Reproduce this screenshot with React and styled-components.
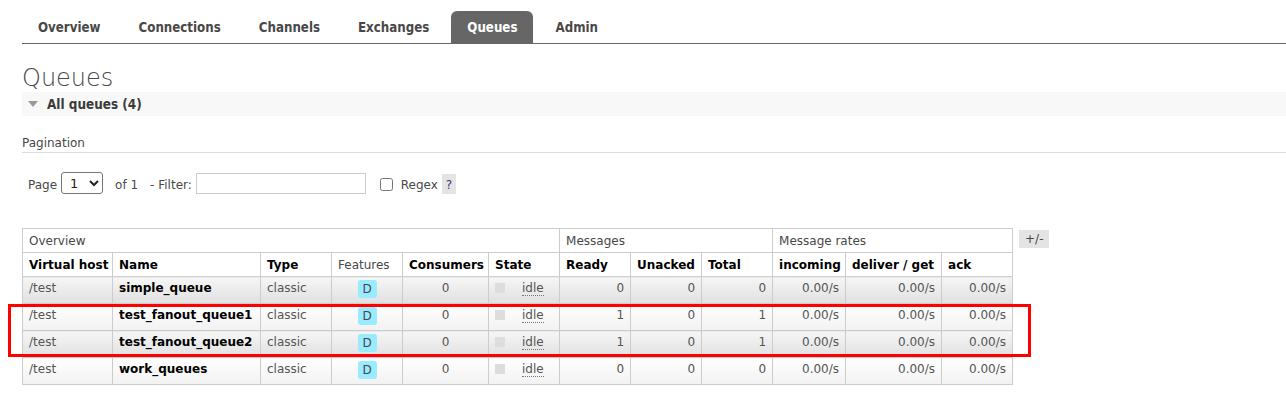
import React from 'react';
import styled, { createGlobalStyle } from 'styled-components';

const GlobalStyle = createGlobalStyle`
  body {
    margin: 0;
    background: #fff;
    font-family: 'DejaVu Sans', Verdana, sans-serif;
    font-size: 12px;
    color: #484848;
  }
`;

const Page = styled.div`
  position: relative;
  padding: 11px 0 10px 22px;
`;

const Tabs = styled.ul`
  display: flex;
  margin: 0;
  padding: 0;
  list-style: none;
  border-bottom: 1px solid #666;
`;

const Tab = styled.li`
  height: 32px;
  line-height: 33px;
  padding: 0 16px;
  margin-right: 6px;
  border-radius: 6px 6px 0 0;
  font-family: 'DejaVu Sans Condensed', 'DejaVu Sans', sans-serif;
  font-stretch: condensed;
  font-weight: bold;
  font-size: 13.2px;
  color: ${({ active }) => (active ? '#fff' : '#484848')};
  background: ${({ active }) => (active ? '#666' : 'transparent')};
`;

const Title = styled.h1`
  margin: 20px 0 0;
  font-size: 24px;
  line-height: 28px;
  font-weight: 200;
  color: #484848;
`;

const SectionBar = styled.div`
  display: flex;
  align-items: center;
  height: 24px;
  padding-left: 6px;
  background: #f8f8f8;
  font-family: 'DejaVu Sans Condensed', 'DejaVu Sans', sans-serif;
  font-stretch: condensed;
  font-weight: bold;
  font-size: 13.4px;
  color: #3a3a3a;

  svg {
    margin-right: 9px;
  }
`;

const SubHeading = styled.h3`
  margin: 19px 0 0;
  padding-bottom: 1px;
  font-size: 12px;
  line-height: 16px;
  font-weight: normal;
  border-bottom: 1px solid #ddd;
`;

const PagerRow = styled.div`
  display: flex;
  align-items: center;
  height: 22px;
  margin-top: 19px;
  padding-left: 6px;
`;

const Label = styled.span`
  margin-left: ${({ gap }) => gap || 0}px;
  padding-top: 3px;
`;

const Select = styled.select`
  width: 42px;
  height: 22px;
  margin-left: 4px;
  padding-left: 4px;
  font-family: 'DejaVu Sans', sans-serif;
  font-size: 13px;
  border: 1px solid #767676;
  border-radius: 3px;
  background: #fff;
  color: #222;
`;

const FilterInput = styled.input`
  width: 170px;
  height: 21px;
  box-sizing: border-box;
  margin: 0 0 0 4px;
  border: 1px solid #ccc;
`;

const Check = styled.input`
  width: 13px;
  height: 13px;
  margin: 2px 0 0 14px;
`;

const Help = styled.span`
  display: inline-block;
  margin: 2px 0 0 4px;
  padding: 0 4px;
  height: 20px;
  line-height: 22px;
  background: #e4e4e4;
  color: #3b3b6b;
`;

const TableArea = styled.div`
  display: flex;
  align-items: flex-start;
  margin-top: 34px;
`;

const Table = styled.table`
  width: 991px;
  table-layout: fixed;
  border-collapse: collapse;
  font-size: 12px;

  th,
  td {
    border: 1px solid #ccc;
    padding: 0 6px;
    text-align: left;
    white-space: nowrap;
    overflow: hidden;
  }

  thead tr {
    height: 24px;
  }

  thead th {
    background: #fff;
    font-weight: bold;
    color: #000;
  }

  thead tr:first-child th {
    font-weight: normal;
    color: #484848;
  }

  tbody td {
    padding-top: 3px;
    padding-bottom: 0;
    vertical-align: top;
    line-height: 16px;
    color: #555;
  }
`;

const HeadCell = styled.th`
  && {
    font-weight: ${({ plain }) => (plain ? 'normal' : 'bold')};
    color: ${({ plain }) => (plain ? '#484848' : '#000')};
  }
`;

const Row = styled.tr`
  height: 27px;

  td {
    background: ${({ alt }) =>
      alt
        ? 'linear-gradient(to bottom, #f6f6f6 0%, #e0e0e0 100%)'
        : 'linear-gradient(to bottom, #ffffff 0%, #f2f2f2 100%)'};
  }
`;

const Cell = styled.td`
  && {
    text-align: ${({ align }) => align || 'left'};
    font-weight: ${({ strong }) => (strong ? 'bold' : 'normal')};
    color: ${({ strong }) => (strong ? '#000' : '#555')};
  }
`;

const Badge = styled.span`
  display: inline-block;
  vertical-align: top;
  width: 19px;
  height: 18px;
  line-height: 19px;
  text-align: center;
  border-radius: 3px;
  background: #99ebff;
  color: #484848;
`;

const StatusDot = styled.span`
  display: inline-block;
  width: 10px;
  height: 10px;
  margin: 3px 17px 0 0;
  vertical-align: top;
  background: #ddd;
`;

const Idle = styled.abbr`
  text-decoration: none;
  border-bottom: 1px dotted #777;
`;

const ToggleButton = styled.span`
  margin: 2px 0 0 6px;
  padding: 0 6px;
  height: 18px;
  line-height: 18px;
  background: #e4e4e4;
  color: #484848;
`;

const Highlight = styled.div`
  position: absolute;
  left: 8px;
  top: 304px;
  width: 1023px;
  height: 53px;
  box-sizing: border-box;
  border: 3px solid #f00;
  pointer-events: none;
`;

const tabs = ['Overview', 'Connections', 'Channels', 'Exchanges', 'Queues', 'Admin'];
const widths = [90, 148, 71, 71, 86, 71, 71, 71, 71, 73, 96, 71];

const queues = [
  { name: 'simple_queue', ready: 0, total: 0 },
  { name: 'test_fanout_queue1', ready: 1, total: 1 },
  { name: 'test_fanout_queue2', ready: 1, total: 1 },
  { name: 'work_queues', ready: 0, total: 0 },
];

const Triangle = () => (
  <svg width="10" height="7" viewBox="0 0 10 7">
    <path d="M0 0 L10 0 L5 6 Z" fill="#999" />
  </svg>
);

export default function App() {
  return (
    <Page>
      <GlobalStyle />
      <Tabs>
        {tabs.map((t) => (
          <Tab key={t} active={t === 'Queues'}>
            {t}
          </Tab>
        ))}
      </Tabs>

      <Title>Queues</Title>
      <SectionBar>
        <Triangle />
        All queues (4)
      </SectionBar>

      <SubHeading>Pagination</SubHeading>
      <PagerRow>
        <Label>Page</Label>
        <Select defaultValue="1">
          <option value="1">1</option>
        </Select>
        <Label gap={12}>of 1</Label>
        <Label gap={12}>- Filter:</Label>
        <FilterInput type="text" />
        <Check type="checkbox" />
        <Label gap={8}>Regex</Label>
        <Help>?</Help>
      </PagerRow>

      <TableArea>
        <Table>
          <colgroup>
            {widths.map((w, i) => (
              <col key={i} style={{ width: w }} />
            ))}
          </colgroup>
          <thead>
            <tr>
              <th colSpan={6}>Overview</th>
              <th colSpan={3}>Messages</th>
              <th colSpan={3}>Message rates</th>
            </tr>
            <tr>
              <HeadCell>Virtual host</HeadCell>
              <HeadCell>Name</HeadCell>
              <HeadCell>Type</HeadCell>
              <HeadCell plain>Features</HeadCell>
              <HeadCell>Consumers</HeadCell>
              <HeadCell>State</HeadCell>
              <HeadCell>Ready</HeadCell>
              <HeadCell>Unacked</HeadCell>
              <HeadCell>Total</HeadCell>
              <HeadCell>incoming</HeadCell>
              <HeadCell>deliver / get</HeadCell>
              <HeadCell>ack</HeadCell>
            </tr>
          </thead>
          <tbody>
            {queues.map((q, i) => (
              <Row key={q.name} alt={i % 2 === 0}>
                <Cell>/test</Cell>
                <Cell strong>{q.name}</Cell>
                <Cell>classic</Cell>
                <Cell align="center">
                  <Badge>D</Badge>
                </Cell>
                <Cell align="center">0</Cell>
                <Cell>
                  <StatusDot />
                  <Idle>idle</Idle>
                </Cell>
                <Cell align="right">{q.ready}</Cell>
                <Cell align="right">0</Cell>
                <Cell align="right">{q.total}</Cell>
                <Cell align="right">0.00/s</Cell>
                <Cell align="right">0.00/s</Cell>
                <Cell align="right">0.00/s</Cell>
              </Row>
            ))}
          </tbody>
        </Table>
        <ToggleButton>+/-</ToggleButton>
      </TableArea>

      <Highlight />
    </Page>
  );
}
